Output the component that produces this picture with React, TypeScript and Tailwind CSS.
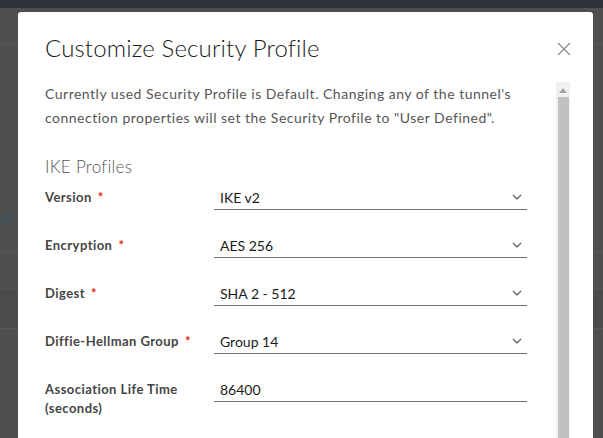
import React from "react";

type Row = { label: string[]; value: string; required?: boolean; select?: boolean };

const rows: Row[] = [
  { label: ["Version"], value: "IKE v2", required: true, select: true },
  { label: ["Encryption"], value: "AES 256", required: true, select: true },
  { label: ["Digest"], value: "SHA 2 - 512", required: true, select: true },
  { label: ["Diffie-Hellman Group"], value: "Group 14", required: true, select: true },
  { label: ["Association Life Time", "(seconds)"], value: "86400" },
];

const Chevron = () => (
  <svg width="10" height="6" viewBox="0 0 10 6" className="shrink-0">
    <path d="M1 1 L5 5 L9 1" fill="none" stroke="#565656" strokeWidth="1.2" />
  </svg>
);

const FieldRow: React.FC<{ row: Row }> = ({ row }) => (
  <div className="flex h-[48px]">
    <div className="w-[169px] pt-[3px] text-[13px] font-bold leading-[19px] tracking-[0.45px] text-[#454545]">
      {row.label.map((l, i) => (
        <div key={i}>
          {l}
          {row.required && i === row.label.length - 1 && (
            <span className="ml-[6px] text-[#e12200]">*</span>
          )}
        </div>
      ))}
    </div>
    <div className="flex h-[25px] w-[313px] items-center justify-between border-b border-[#747474] pl-[6px] pr-[5px]">
      <span className="text-[14px] text-[#1b1b1b]">{row.value}</span>
      {row.select && <Chevron />}
    </div>
  </div>
);

export default function App() {
  return (
    <div
      className="relative h-[438px] w-[603px] overflow-hidden bg-[#4f4f4f]"
      style={{ fontFamily: "Lato, 'Open Sans', sans-serif" }}
    >
      {/* page behind the modal */}
      <div className="h-[8px] bg-[#2d3338]" />
      <div className="h-[36px] border-b border-[#575757]" />
      <div className="flex h-[209px] items-end border-b border-[#575757] pb-[23px]">
        <span className="-ml-[4px] text-[13px] font-bold tracking-[2px] text-[#3d5564]">OFI</span>
      </div>
      <div className="h-[37px] border-b border-[#575757]" />
      <div className="h-[39px] border-b border-[#575757] bg-[#4a4b4d]" />

      {/* modal */}
      <div className="absolute left-[18px] top-[12px] h-[440px] w-[575px] rounded-[3px] bg-white">
        <div className="flex items-start justify-between pl-[27px] pr-[22px] pt-[21px]">
          <h1 className="text-[24px] font-light leading-[30px] tracking-[0.15px] text-[#1b1b1b]">
            Customize Security Profile
          </h1>
          <svg width="14" height="14" viewBox="0 0 14 14" className="mt-[9px]">
            <path d="M1 1 L13 13 M13 1 L1 13" stroke="#8c8c8c" strokeWidth="1.3" />
          </svg>
        </div>

        <div className="mt-[19px] flex">
          <div className="w-[509px] pl-[27px]">
            <p className="w-[482px] text-[14px] leading-[24px] tracking-[0.5px] text-[#565656]">
              Currently used Security Profile is Default. Changing any of the tunnel's
              connection properties will set the Security Profile to "User Defined".
            </p>
            <h2 className="mt-[25px] text-[17px] font-light leading-[24px] tracking-[0.3px] text-[#565656]">
              IKE Profiles
            </h2>
            <div className="mt-[6px]">
              {rows.map((r) => (
                <FieldRow key={r.label[0]} row={r} />
              ))}
            </div>
          </div>
          <div className="ml-[29px] flex h-[360px] w-[14px] flex-col items-center bg-[#f1f1f1]">
            <svg width="8" height="5" viewBox="0 0 8 5" className="mt-[6px]">
              <path d="M0 5 L4 0 L8 5 Z" fill="#a3a3a3" />
            </svg>
            <div className="mt-[4px] w-[11px] flex-1 bg-[#c1c1c1]" />
          </div>
        </div>
      </div>
    </div>
  );
}
